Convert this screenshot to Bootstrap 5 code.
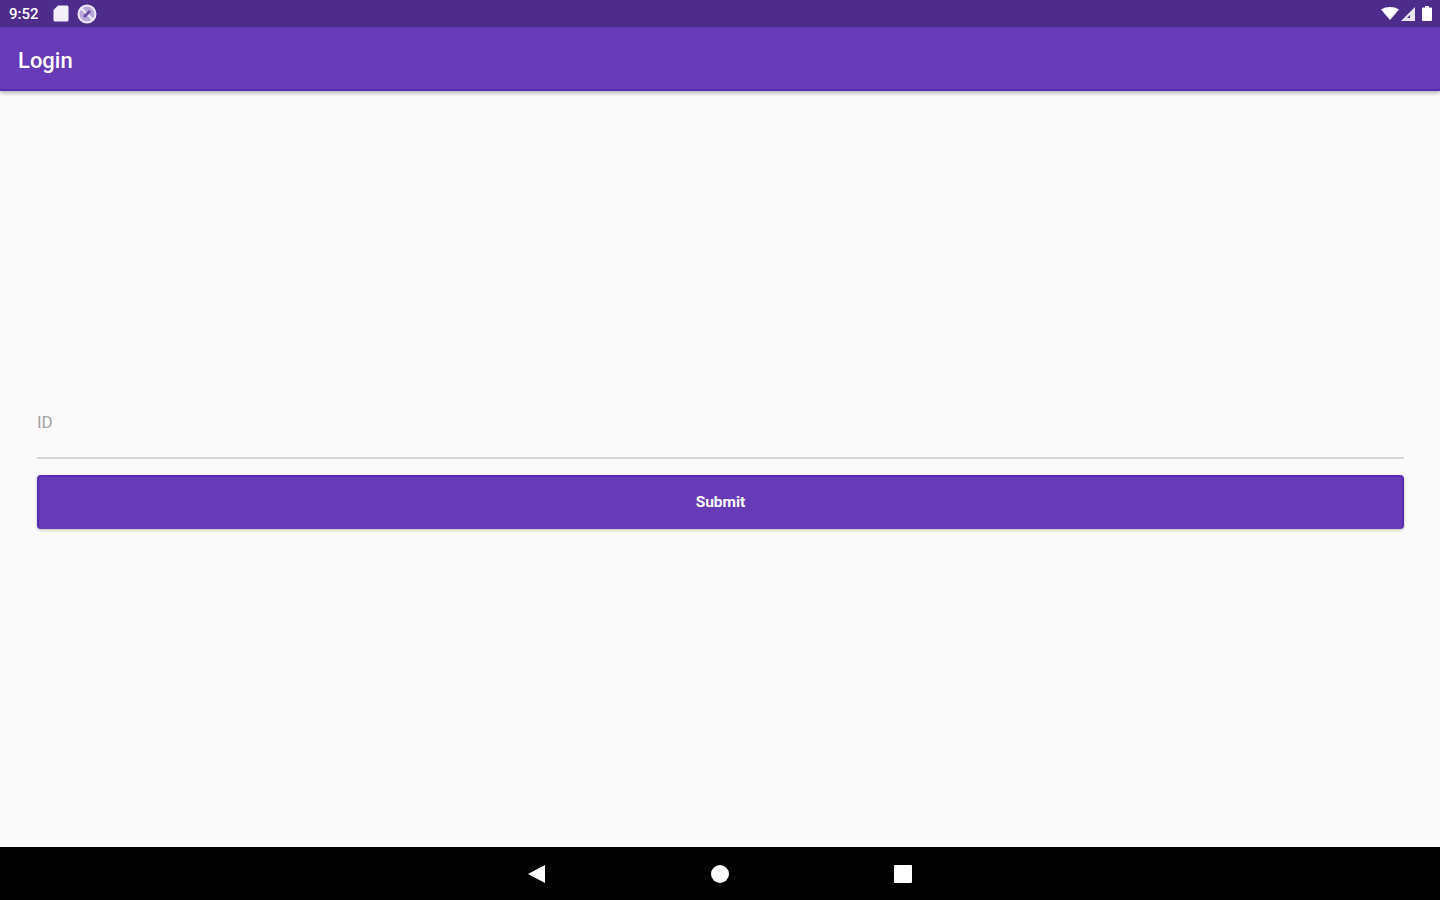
<!DOCTYPE html>
<html lang="en">
<head>
<meta charset="utf-8">
<title>Login</title>
<link href="https://cdn.jsdelivr.net/npm/bootstrap@5.3.0/dist/css/bootstrap.min.css" rel="stylesheet">
<style>
html, body { height: 100%; }
body { background: #fafafa; font-family: Roboto, "Liberation Sans", sans-serif; overflow: hidden; }
.screen { height: 900px; }
.status-strip { height: 27px; background: #4e2c8b; color: #fff; padding: 0 8px 0 9px; }
.clock { font-size: 15px; font-weight: 500; line-height: 1; width: 44px; padding-top: 2px; }
.icon-gap-b { margin-left: 2px; }
.icon-gap-c { margin-left: 7px; }
.app-strip { height: 64px; background: #673ab7; box-shadow: 0 2px 4px rgba(0,0,0,.3); border-bottom: 2px solid #5a2bb0; padding: 6px 18px 0; }
.app-name { font-size: 22px; font-weight: 500; color: #fff; line-height: 1; }
.form-area { padding: 0 36px 0 37px; }
.id-field { height: 52px; margin-top: 316px; border: 0; border-bottom: 2px solid #d6d6d6; border-radius: 0; background: transparent; padding: 0 0 20px; font-size: 17px; box-shadow: none; }
.id-field::placeholder { color: #a3a3a3; opacity: 1; }
.id-field:focus { background: transparent; border-color: #d6d6d6; box-shadow: none; }
.submit-btn { height: 54px; margin-top: 16px; background: #673ab7; border: 0; border-left: 2px solid #5a2bb0; border-top: 2px solid #5a2bb0; border-right: 2px solid #5a2bb0; border-radius: 4px; color: #fff; font-size: 15.500px; font-weight: 700; box-shadow: 0 1px 3px rgba(0,0,0,.25); padding: 0; }
.submit-btn:hover, .submit-btn:active { background: #673ab7 !important; color: #fff !important; border-color: #5a2bb0 !important; }
.nav-strip { height: 53px; background: #000; }
.nav-slot { width: 183px; }
</style>
</head>
<body>
<div class="screen d-flex flex-column">
  <div class="status-strip d-flex align-items-center flex-shrink-0">
    <span class="clock">9:52</span>
    <svg width="16" height="17" viewBox="0 0 16 17" aria-hidden="true"><path d="M5 .5h9a1.500 1.500 0 0 1 1.500 1.500v13a1.500 1.500 0 0 1-1.500 1.500H2A1.500 1.500 0 0 1 .5 15V5z" fill="#f4f0fa"/></svg>
    <svg class="ms-2" width="20" height="20" viewBox="0 0 20 20" aria-hidden="true"><circle cx="10" cy="10" r="8.500" fill="#b9a8d8" stroke="#eee9f6" stroke-width="2"/><path d="M4 4l12 12" stroke="#f1edf8" stroke-width="2"/><path d="M6 12l6-6 2 2-6 6z" fill="#6e4fa3"/></svg>
    <div class="ms-auto d-flex align-items-center">
      <svg width="18" height="13" viewBox="0 0 18 13" aria-hidden="true"><path d="M0 2.500C5.300 -.8 12.700 -.8 18 2.500L9 13z" fill="#fff"/></svg>
      <svg class="icon-gap-b" width="14" height="14" viewBox="0 0 14 14" aria-hidden="true"><path d="M14 0v14H0z" fill="#e9e3f3"/><path d="M9 8v3H6z" fill="#4e2c8b"/></svg>
      <svg class="icon-gap-c" width="10" height="15" viewBox="0 0 10 15" aria-hidden="true"><path d="M3 0h4v1.500h2a1 1 0 0 1 1 1V14a1 1 0 0 1-1 1H1a1 1 0 0 1-1-1V2.500a1 1 0 0 1 1-1h2z" fill="#fff"/></svg>
    </div>
  </div>
  <div class="app-strip d-flex align-items-center flex-shrink-0">
    <span class="app-name">Login</span>
  </div>
  <main class="form-area flex-grow-1 d-flex flex-column">
    <input class="form-control id-field" type="text" placeholder="ID" aria-label="ID">
    <button class="btn submit-btn w-100" type="button">Submit</button>
  </main>
  <div class="nav-strip d-flex justify-content-center align-items-center flex-shrink-0">
    <div class="nav-slot d-flex justify-content-center">
      <svg width="18" height="18" viewBox="0 0 18 18" aria-hidden="true"><path d="M0 9L17 0v18z" fill="#fff"/></svg>
    </div>
    <div class="nav-slot d-flex justify-content-center">
      <svg width="18" height="18" viewBox="0 0 18 18" aria-hidden="true"><circle cx="9" cy="9" r="9" fill="#fff"/></svg>
    </div>
    <div class="nav-slot d-flex justify-content-center">
      <svg width="18" height="18" viewBox="0 0 18 18" aria-hidden="true"><rect width="18" height="18" rx="1" fill="#fff"/></svg>
    </div>
  </div>
</div>
<script src="https://cdn.jsdelivr.net/npm/bootstrap@5.3.0/dist/js/bootstrap.bundle.min.js"></script>
</body>
</html>
